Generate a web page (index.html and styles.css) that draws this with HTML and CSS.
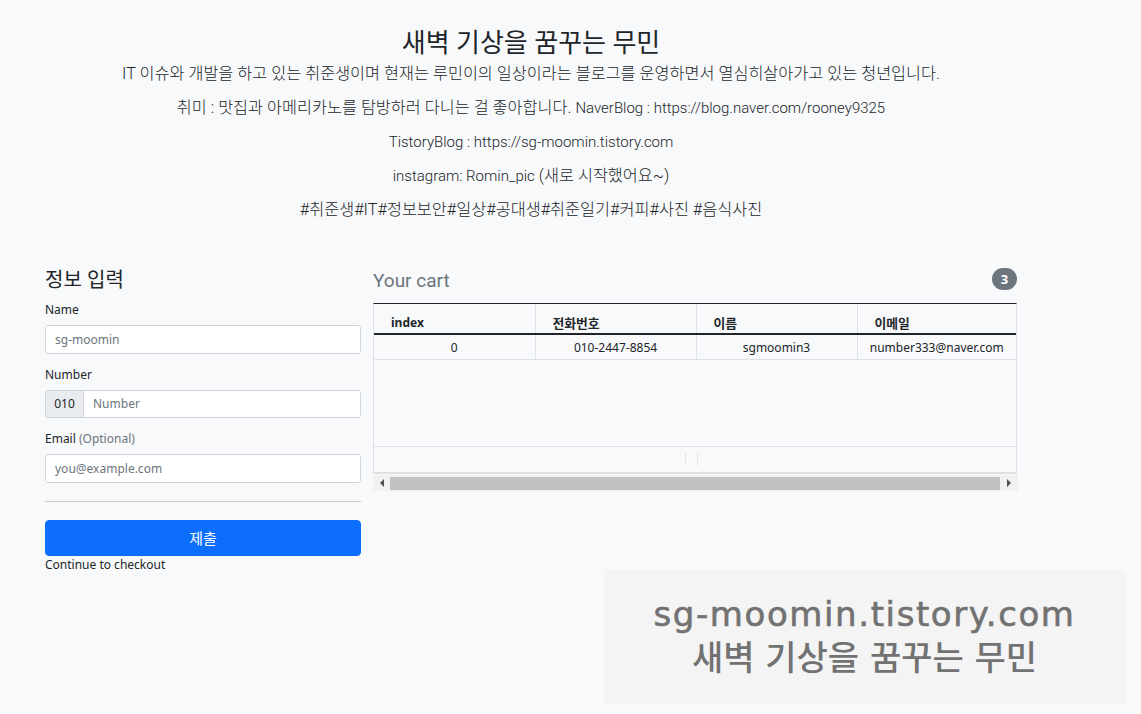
FILE: index.html
```html
<!DOCTYPE html>
<html lang="ko">
<head>
<meta charset="utf-8">
<title>새벽 기상을 꿈꾸는 무민</title>
<link rel="stylesheet" href="styles.css">
</head>
<body>
<main class="page">
  <header class="intro">
    <h1 class="intro-title">새벽 기상을 꿈꾸는 무민</h1>
    <p class="lead">IT 이슈와 개발을 하고 있는 취준생이며 현재는 루민이의 일상이라는 블로그를 운영하면서 열심히살아가고 있는 청년입니다.</p>
    <p class="lead">취미 : 맛집과 아메리카노를 탐방하러 다니는 걸 좋아합니다. <span class="lat">NaverBlog : https://blog.naver.com/rooney9325</span></p>
    <p class="lead"><span class="lat">TistoryBlog : https://sg-moomin.tistory.com</span></p>
    <p class="lead"><span class="lat">instagram: Romin_pic</span> (새로 시작했어요~)</p>
    <p class="lead">#취준생#IT#정보보안#일상#공대생#취준일기#커피#사진 #음식사진</p>
  </header>

  <div class="row">
    <section class="col-form">
      <h4 class="sec-title">정보 입력</h4>
      <form class="form">
        <div class="field">
          <label class="label">Name</label>
          <input class="input" type="text" placeholder="sg-moomin">
        </div>
        <div class="field">
          <label class="label">Number</label>
          <div class="input-group">
            <span class="addon">010</span>
            <input class="input input-grouped" type="text" placeholder="Number">
          </div>
        </div>
        <div class="field">
          <label class="label">Email <span class="muted">(Optional)</span></label>
          <input class="input" type="text" placeholder="you@example.com">
        </div>
        <hr class="divider">
        <button class="btn-submit" type="button">제출</button>
        <p class="after-btn">Continue to checkout</p>
      </form>
    </section>

    <section class="col-cart">
      <h4 class="cart-head">
        <span class="cart-title">Your cart</span>
        <span class="badge">3</span>
      </h4>
      <div class="grid">
        <table class="grid-table">
          <colgroup>
            <col class="c1"><col class="c2"><col class="c3"><col>
          </colgroup>
          <thead>
            <tr><th>index</th><th class="ko-th">전화번호</th><th class="ko-th">이름</th><th class="ko-th">이메일</th></tr>
          </thead>
          <tbody>
            <tr><td>0</td><td>010-2447-8854</td><td>sgmoomin3</td><td>number333@naver.com</td></tr>
          </tbody>
        </table>
        <div class="grid-empty"></div>
        <div class="grid-foot">
          <span class="pager-line"></span>
          <span class="pager-line"></span>
        </div>
      </div>
      <div class="hscroll">
        <span class="sb-btn sb-left"><span class="tri-left"></span></span>
        <span class="sb-thumb"></span>
        <span class="sb-btn sb-right"><span class="tri-right"></span></span>
      </div>
    </section>
  </div>
</main>

<div class="watermark">
  <div class="wm-line wm-url">sg-moomin.tistory.com</div>
  <div class="wm-line">새벽 기상을 꿈꾸는 무민</div>
</div>
</body>
</html>
```

FILE: styles.css
```css
* { box-sizing: border-box; }

html, body {
  margin: 0;
  padding: 0;
}

body {
  background: #f8f9fa;
  color: #212529;
  font-family: "Noto Sans", "Noto Sans CJK KR", sans-serif;
  font-size: 12px;
  line-height: 1.5;
  width: 1141px;
  height: 714px;
  overflow: hidden;
  position: relative;
}

.page {
  margin-left: 45px;
  width: 972px;
}

/* ---------- intro ---------- */
.intro {
  text-align: center;
  padding-top: 29px;
  height: 266px;
}

.intro-title {
  margin: 0 0 5px;
  font-family: Roboto, "Noto Sans CJK KR", sans-serif;
  font-size: 26px;
  line-height: 29px;
  font-weight: 400;
}

.lead {
  margin: 0 0 11.5px;
  font-family: Roboto, "Noto Sans CJK KR", sans-serif;
  font-size: 16.3px;
  line-height: 22.5px;
  font-weight: 300;
}

.lat {
  font-size: 15px;
}

/* ---------- columns ---------- */
.row {
  display: flex;
  gap: 12px;
}

.col-form {
  width: 316px;
  flex: none;
}

.col-cart {
  width: 644px;
  flex: none;
}

.sec-title {
  margin: 0 0 10px;
  padding-top: 2px;
  font-size: 20px;
  line-height: 23px;
  font-weight: 400;
}

/* ---------- form ---------- */
.form {
  display: flex;
  flex-direction: column;
}

.field {
  display: flex;
  flex-direction: column;
  margin-bottom: 12px;
}

.field:nth-child(3) { margin-bottom: 0; }

.label {
  display: block;
  font-size: 12px;
  line-height: 18px;
  margin-bottom: 6px;
}

.muted { color: #6c757d; }

.input {
  display: block;
  width: 100%;
  height: 28.5px;
  padding: 4.5px 9px;
  font-family: inherit;
  font-size: 12px;
  line-height: 18px;
  color: #212529;
  background: #fff;
  border: 1px solid #ced4da;
  border-radius: 3px;
  outline: none;
}

.input::placeholder { color: #6c757d; opacity: 1; }

.input-group {
  display: flex;
  width: 100%;
}

.addon {
  flex: none;
  width: 39px;
  height: 28.5px;
  padding: 4.5px 0;
  text-align: center;
  font-size: 12px;
  line-height: 18px;
  background: #e9ecef;
  border: 1px solid #ced4da;
  border-radius: 3px 0 0 3px;
}

.input-grouped {
  flex: 1;
  width: auto;
  margin-left: -1px;
  border-radius: 0 3px 3px 0;
}

.divider {
  margin: 18px 0;
  border: 0;
  border-top: 1px solid #c8c9ca;
  height: 0;
}

.btn-submit {
  display: block;
  width: 100%;
  height: 36.5px;
  padding: 6px 12px;
  font-family: inherit;
  font-size: 15px;
  line-height: 22.5px;
  color: #fff;
  background: #0d6efd;
  border: 1px solid #0d6efd;
  border-radius: 4px;
}

.after-btn {
  margin: 0;
  font-size: 12px;
  line-height: 18px;
}

/* ---------- cart ---------- */
.cart-head {
  display: flex;
  justify-content: space-between;
  align-items: center;
  margin: 0 0 14px;
  height: 23px;
  font-weight: 400;
}

.cart-title {
  font-family: Roboto, "Noto Sans", sans-serif;
  font-size: 19px;
  line-height: 23px;
  color: #6c757d;
  padding-top: 5px;
}

.badge {
  display: inline-block;
  width: 25px;
  height: 22px;
  border-radius: 11px;
  background: #6c757d;
  color: #fff;
  font-size: 13px;
  font-weight: 700;
  line-height: 22px;
  text-align: center;
  margin-top: 3px;
}

.grid {
  width: 644px;
  border-left: 1px solid #dee2e6;
  border-right: 1px solid #dee2e6;
  border-top: 1px solid #212529;
}

.grid-table {
  width: 100%;
  border-collapse: collapse;
  table-layout: fixed;
}

.c1 { width: 161px; }
.c2 { width: 161px; }
.c3 { width: 161px; }

.grid-table th {
  height: 30px;
  padding: 0 0 1px 17px;
  text-align: left;
  vertical-align: bottom;
  font-size: 12px;
  line-height: 18px;
  font-weight: 700;
  border-left: 1px solid #dee2e6;
  border-bottom: 2px solid #212529;
}

.grid-table th.ko-th { font-size: 12.8px; }

.grid-table td {
  height: 25px;
  padding: 2px 0 0;
  text-align: center;
  vertical-align: middle;
  font-size: 12px;
  line-height: 18px;
  border-left: 1px solid #dee2e6;
  border-bottom: 1px solid #dee2e6;
}

.grid-table th:first-child,
.grid-table td:first-child { border-left: 0; }

.grid-empty {
  height: 87px;
  border-bottom: 1px solid #dee2e6;
}

.grid-foot {
  height: 27px;
  display: flex;
  justify-content: center;
  align-items: center;
  gap: 11px;
  padding-right: 8px;
  border-bottom: 2px solid #dcdee0;
}

.pager-line {
  width: 1px;
  height: 13px;
  background: #e3e5e7;
}

.hscroll {
  display: flex;
  align-items: center;
  width: 645px;
  height: 16px;
  background: #f1f1f1;
  margin-top: 1px;
}

.sb-btn {
  flex: none;
  height: 16px;
  display: flex;
  align-items: center;
  justify-content: center;
}

.sb-left { width: 17px; }
.sb-right { width: 18px; }

.tri-left {
  width: 0;
  height: 0;
  border-top: 4px solid transparent;
  border-bottom: 4px solid transparent;
  border-right: 4px solid #505050;
}

.tri-right {
  width: 0;
  height: 0;
  border-top: 4px solid transparent;
  border-bottom: 4px solid transparent;
  border-left: 4px solid #505050;
}

.sb-thumb {
  flex: 1;
  height: 13px;
  background: #c1c1c1;
  margin-top: 1px;
}

/* ---------- watermark overlay ---------- */
.watermark {
  position: absolute;
  left: 604px;
  top: 570px;
  width: 521px;
  height: 134px;
  background: #f4f4f4;
  display: flex;
  flex-direction: column;
  align-items: center;
  justify-content: center;
  padding-bottom: 2px;
  color: #727272;
  font-family: "DejaVu Sans", "Noto Sans CJK KR", sans-serif;
  font-size: 34px;
  line-height: 44px;
  font-weight: 500;
}

.wm-line { white-space: nowrap; }

.wm-url {
  letter-spacing: 1.6px;
  -webkit-text-stroke: 0.6px #727272;
}
```
